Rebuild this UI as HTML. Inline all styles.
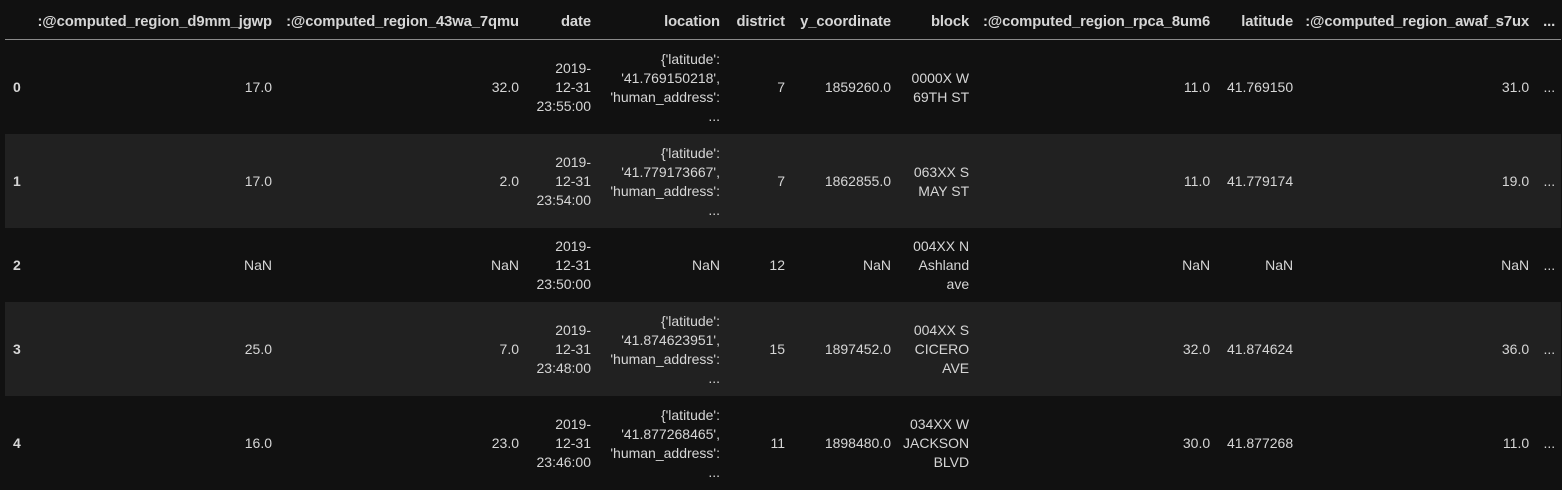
<!DOCTYPE html>
<html><head><meta charset="utf-8"><style>
html,body{margin:0;padding:0;background:#111111;width:1562px;height:481px;overflow:hidden}
table{position:absolute;left:5px;top:0;border-collapse:collapse;table-layout:fixed;font-family:"Liberation Sans",sans-serif;font-size:14px;color:#d6d6d6;line-height:19px}
th,td{padding:0 6px;text-align:right;white-space:nowrap;overflow:visible}
th{font-weight:bold;font-size:14.8px;height:34px;border-bottom:1px solid #8a8a8a;vertical-align:middle;padding-top:5px;letter-spacing:-0.1px}
td{vertical-align:middle;padding-top:2px}
tr.r4{height:94px}tr.r3{height:74px}
tr.odd td{background:#212121}
td.i{text-align:left;font-weight:bold;padding-left:8px}
</style></head><body>
<table>
<colgroup><col style="width:22px"><col style="width:251px"><col style="width:247px"><col style="width:72px"><col style="width:129px"><col style="width:65px"><col style="width:106px"><col style="width:78px"><col style="width:241px"><col style="width:83px"><col style="width:236px"><col style="width:26px"></colgroup>
<tr><th></th><th>:@computed_region_d9mm_jgwp</th><th>:@computed_region_43wa_7qmu</th><th>date</th><th>location</th><th>district</th><th>y_coordinate</th><th>block</th><th>:@computed_region_rpca_8um6</th><th>latitude</th><th>:@computed_region_awaf_s7ux</th><th>...</th></tr>
<tr class="r4"><td class="i">0</td><td>17.0</td><td>32.0</td><td>2019-<br>12-31<br>23:55:00</td><td>{'latitude':<br>'41.769150218',<br>'human_address':<br>...</td><td>7</td><td>1859260.0</td><td>0000X W<br>69TH ST</td><td>11.0</td><td>41.769150</td><td>31.0</td><td>...</td></tr>
<tr class="r4 odd"><td class="i">1</td><td>17.0</td><td>2.0</td><td>2019-<br>12-31<br>23:54:00</td><td>{'latitude':<br>'41.779173667',<br>'human_address':<br>...</td><td>7</td><td>1862855.0</td><td>063XX S<br>MAY ST</td><td>11.0</td><td>41.779174</td><td>19.0</td><td>...</td></tr>
<tr class="r3"><td class="i">2</td><td>NaN</td><td>NaN</td><td>2019-<br>12-31<br>23:50:00</td><td>NaN</td><td>12</td><td>NaN</td><td>004XX N<br>Ashland<br>ave</td><td>NaN</td><td>NaN</td><td>NaN</td><td>...</td></tr>
<tr class="r4 odd"><td class="i">3</td><td>25.0</td><td>7.0</td><td>2019-<br>12-31<br>23:48:00</td><td>{'latitude':<br>'41.874623951',<br>'human_address':<br>...</td><td>15</td><td>1897452.0</td><td>004XX S<br>CICERO<br>AVE</td><td>32.0</td><td>41.874624</td><td>36.0</td><td>...</td></tr>
<tr class="r4"><td class="i">4</td><td>16.0</td><td>23.0</td><td>2019-<br>12-31<br>23:46:00</td><td>{'latitude':<br>'41.877268465',<br>'human_address':<br>...</td><td>11</td><td>1898480.0</td><td>034XX W<br>JACKSON<br>BLVD</td><td>30.0</td><td>41.877268</td><td>11.0</td><td>...</td></tr>
</table>
</body></html>
